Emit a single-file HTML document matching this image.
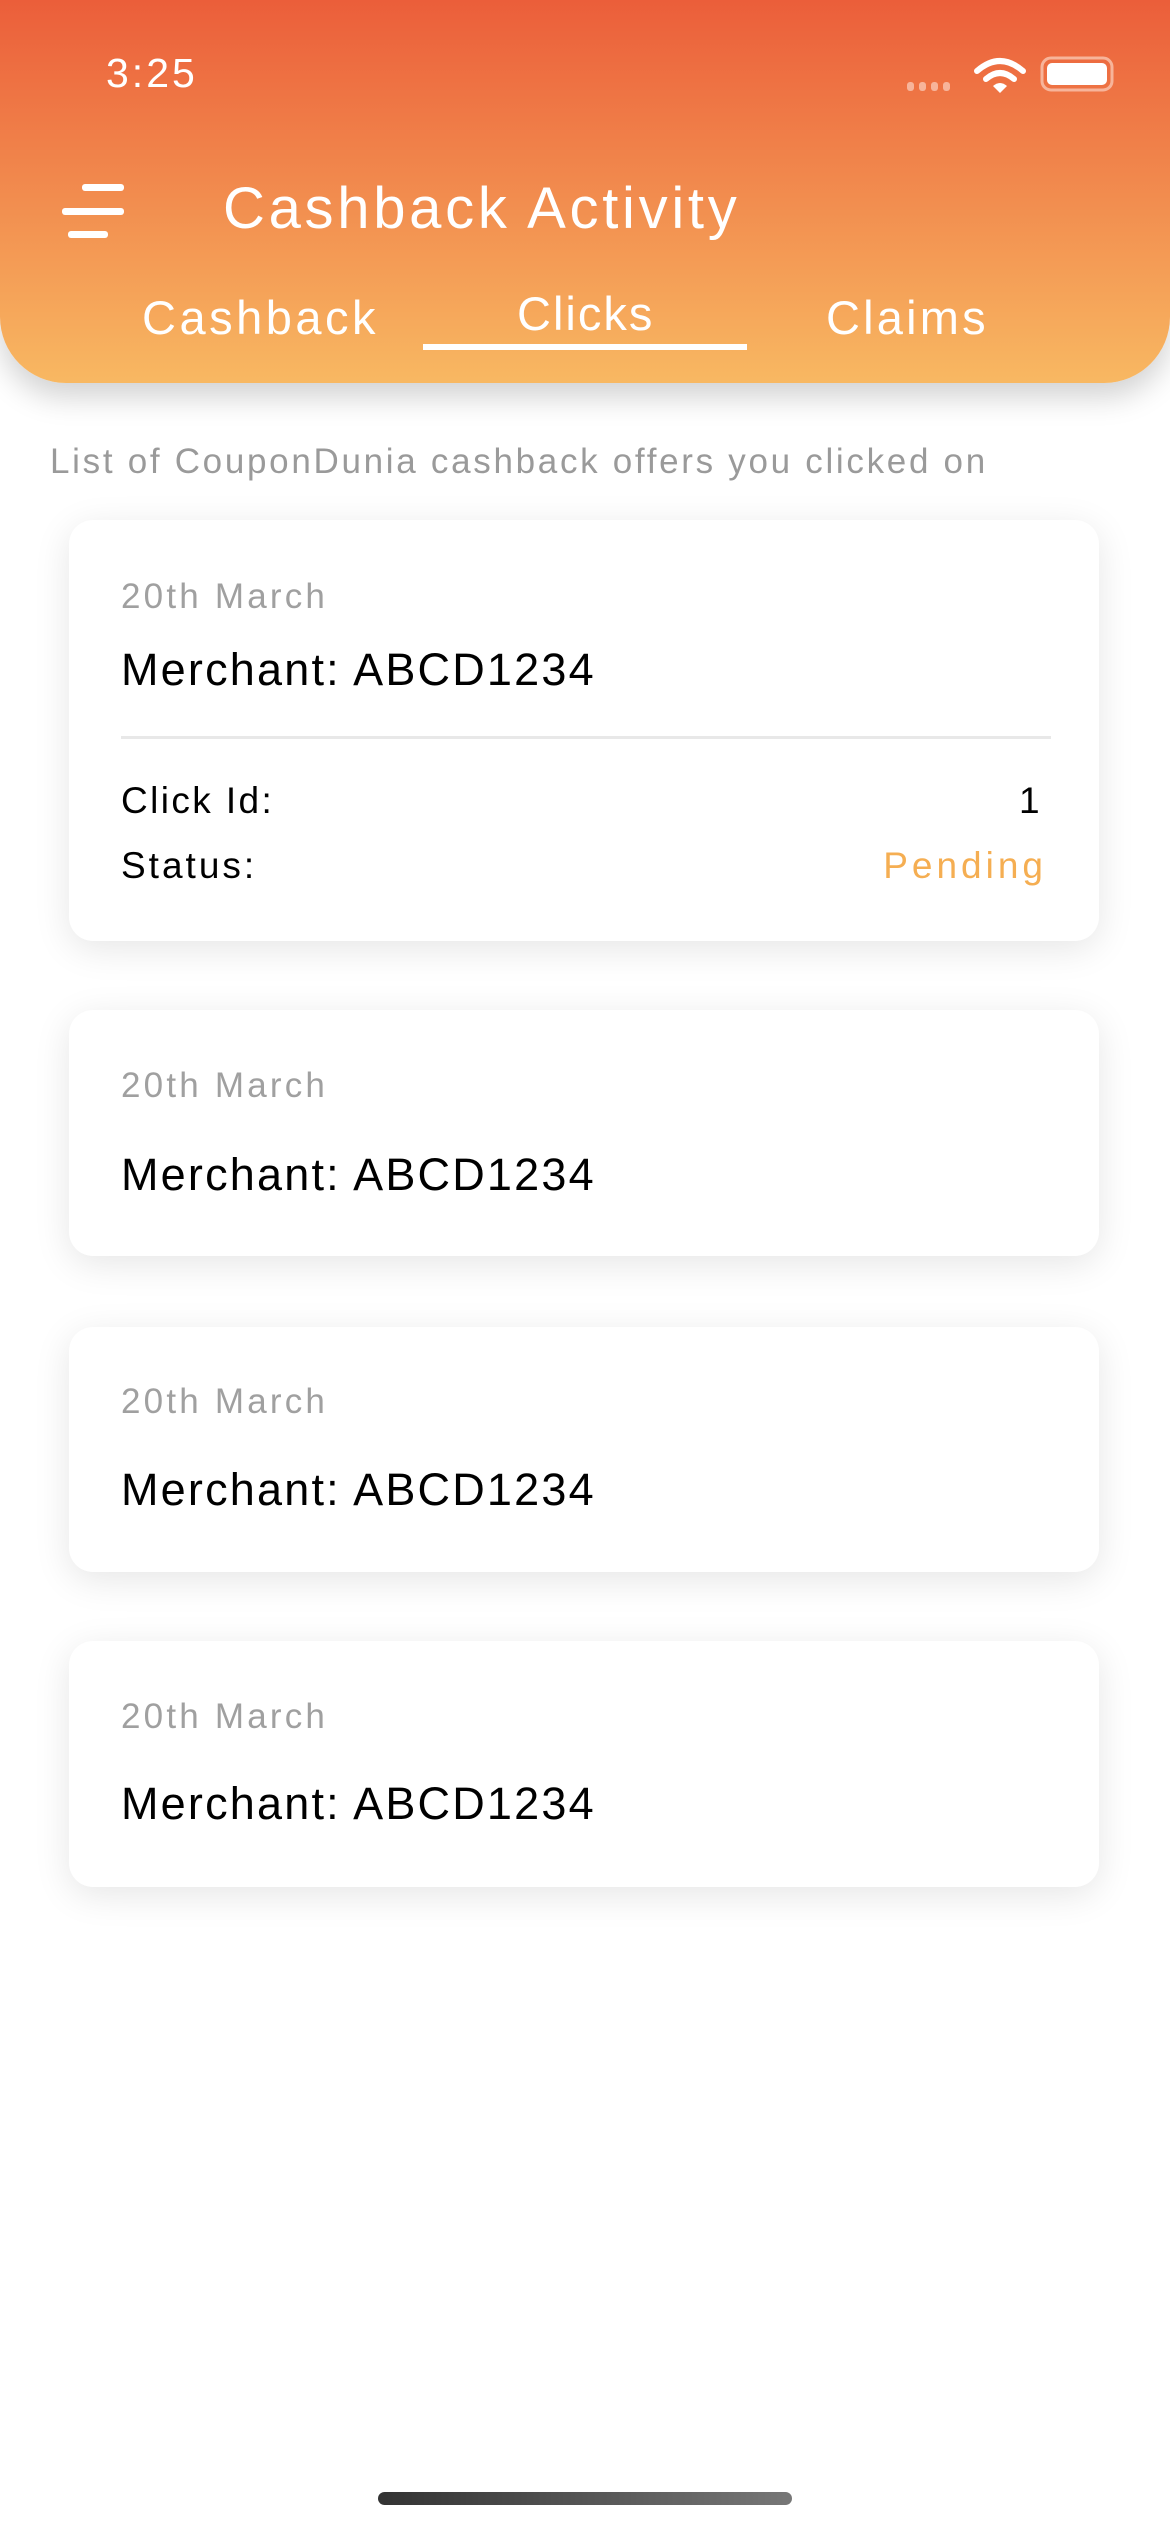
<!DOCTYPE html>
<html><head><meta charset="utf-8"><style>
*{margin:0;padding:0;box-sizing:border-box}
body{width:1170px;height:2532px;background:#fff;position:relative;overflow:hidden;font-family:"Liberation Sans",sans-serif}
.hdr{position:absolute;left:0;top:0;width:1170px;height:383px;background:linear-gradient(#EB5E3A,#F8B862);border-radius:0 0 66px 66px;box-shadow:0 14px 30px rgba(0,0,0,.18)}
.t{position:absolute;white-space:nowrap;line-height:1}
.w{color:#fff}
.card{position:absolute;left:69px;width:1030px;background:#fff;border-radius:24px;box-shadow:0 8px 36px rgba(0,0,0,.10)}
.d{color:#a0a0a0;font-size:35px;letter-spacing:3.2px}
.m{color:#000;font-size:45px;letter-spacing:2.2px}
.r{color:#000;font-size:37px;letter-spacing:2.4px}
</style></head><body>
<div class="hdr"></div>
<div class="t w" style="left:106px;top:53px;font-size:41px;letter-spacing:3px">3:25</div>
<svg style="position:absolute;left:905px;top:55px" width="210" height="40" viewBox="0 0 210 40">
<g fill="#f7b49a"><rect x="2" y="27" width="7" height="9" rx="3"/><rect x="14" y="27" width="7" height="9" rx="3"/><rect x="26" y="27" width="7" height="9" rx="3"/><rect x="38" y="27" width="7" height="9" rx="3"/></g>
<g fill="none" stroke="#fff" stroke-width="6" stroke-linecap="round"><path d="M72 16 Q95 -4 118 16"/><path d="M81 24 Q95 12 109 24"/></g>
<path d="M88 31 L95 38 L102 31 Q95 25 88 31Z" fill="#fff"/>
<rect x="137" y="3" width="70" height="32" rx="9" fill="none" stroke="#f7b49a" stroke-width="3"/>
<rect x="142" y="8" width="60" height="22" rx="5" fill="#fff"/>
</svg>
<div style="position:absolute;left:82px;top:184px;width:42px;height:7px;background:#fff;border-radius:3px"></div>
<div style="position:absolute;left:62px;top:208px;width:62px;height:7px;background:#fff;border-radius:3px"></div>
<div style="position:absolute;left:68px;top:231px;width:40px;height:7px;background:#fff;border-radius:3px"></div>
<div class="t w" style="left:223px;top:180px;font-size:58px;letter-spacing:3.7px">Cashback Activity</div>
<div class="t w" style="left:142px;top:294px;font-size:47px;letter-spacing:3.5px">Cashback</div>
<div class="t w" style="left:517px;top:290px;font-size:47px;letter-spacing:2px">Clicks</div>
<div class="t w" style="left:826px;top:294px;font-size:47px;letter-spacing:3.2px">Claims</div>
<div style="position:absolute;left:423px;top:344px;width:324px;height:6px;background:#fff"></div>
<div class="t" style="left:50px;top:444px;font-size:35px;color:#9a9a9a;letter-spacing:2.7px">List of CouponDunia cashback offers you clicked on</div>

<div class="card" style="top:520px;height:421px"></div>
<div class="t d" style="left:121px;top:579px">20th March</div>
<div class="t m" style="left:121px;top:647px">Merchant: ABCD1234</div>
<div style="position:absolute;left:121px;top:736px;width:930px;height:3px;background:#e8e8e8"></div>
<div class="t r" style="left:121px;top:782px">Click Id:</div>
<div class="t r" style="right:128px;top:782px">1</div>
<div class="t r" style="left:121px;top:847px;letter-spacing:3px">Status:</div>
<div class="t r" style="right:123px;top:847px;color:#F5AE52;letter-spacing:4px">Pending</div>

<div class="card" style="top:1010px;height:246px"></div>
<div class="t d" style="left:121px;top:1068px">20th March</div>
<div class="t m" style="left:121px;top:1152px">Merchant: ABCD1234</div>

<div class="card" style="top:1327px;height:245px"></div>
<div class="t d" style="left:121px;top:1384px">20th March</div>
<div class="t m" style="left:121px;top:1467px">Merchant: ABCD1234</div>

<div class="card" style="top:1641px;height:246px"></div>
<div class="t d" style="left:121px;top:1699px">20th March</div>
<div class="t m" style="left:121px;top:1781px">Merchant: ABCD1234</div>

<div style="position:absolute;left:378px;top:2492px;width:414px;height:13px;background:linear-gradient(90deg,#333,#777);border-radius:7px"></div>
</body></html>
